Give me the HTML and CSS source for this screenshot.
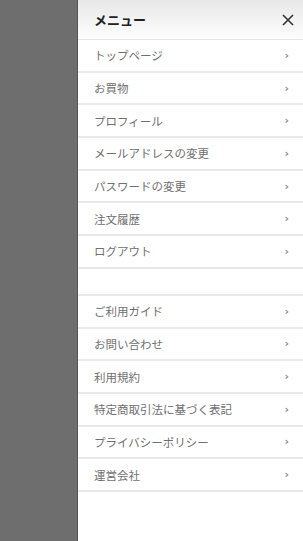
FILE: index.html
```html
<!DOCTYPE html>
<html lang="ja">
<head>
    <meta charset="UTF-8">
    <meta name="viewport" content="width=device-width, initial-scale=1.0">
    <title>メニュー</title>
    <link rel="stylesheet" href="styles.css">
</head>
<body>

    <div class="overlay"></div>

    <nav class="drawer">
        <!-- Header -->
        <div class="drawer-header">
            <span class="drawer-title">メニュー</span>
            <span class="drawer-close">
                <svg width="12" height="12" viewBox="0 0 12 12">
                    <path d="M1 1 L11 11 M11 1 L1 11" stroke="#333" stroke-width="1.6" fill="none"/>
                </svg>
            </span>
        </div>

        <!-- Member Menu -->
        <ul class="menu-list">
            <li><a href="#">トップページ</a></li>
            <li><a href="#">お買物</a></li>
            <li><a href="#">プロフィール</a></li>
            <li><a href="#">メールアドレスの変更</a></li>
            <li><a href="#">パスワードの変更</a></li>
            <li><a href="#">注文履歴</a></li>
            <li><a href="#">ログアウト</a></li>
        </ul>

        <div class="menu-spacer"></div>

        <!-- Info Menu -->
        <ul class="menu-list">
            <li><a href="#">ご利用ガイド</a></li>
            <li><a href="#">お問い合わせ</a></li>
            <li><a href="#">利用規約</a></li>
            <li><a href="#">特定商取引法に基づく表記</a></li>
            <li><a href="#">プライバシーポリシー</a></li>
            <li><a href="#">運営会社</a></li>
        </ul>
    </nav>

</body>
</html>
```

FILE: styles.css
```css
/* General Styles */
* {
    margin: 0;
    padding: 0;
    box-sizing: border-box;
}

body {
    font-family: "Noto Sans CJK JP", "Liberation Sans", sans-serif;
    display: flex;
    min-height: 100vh;
    background: #fff;
}

/* Dimmed page behind the drawer */
.overlay {
    width: 78px;
    flex-shrink: 0;
    background: #6e6e6e;
    border-right: 1px solid #555;
}

.drawer {
    flex: 1;
    background: #fff;
}

/* Header */
.drawer-header {
    height: 40px;
    display: flex;
    align-items: center;
    justify-content: space-between;
    padding: 0 9px 0 16px;
    background: linear-gradient(to bottom, #e8e8e8 0%, #fdfdfd 100%);
    border-bottom: 1px solid #e6e6e6;
}

.drawer-title {
    font-size: 13px;
    font-weight: bold;
    color: #222;
}

.drawer-close {
    display: flex;
    width: 12px;
    height: 12px;
}

/* Menu rows */
.menu-list {
    list-style: none;
}

.menu-list li {
    border-bottom: 2px solid #e9e9e9;
}

.menu-list a {
    display: flex;
    align-items: center;
    justify-content: space-between;
    height: 30.7px;
    padding: 0 14px 0 16px;
    font-size: 11.5px;
    color: #707070;
    text-decoration: none;
}

.menu-list a::after {
    content: "›";
    font-family: "DejaVu Sans", sans-serif;
    font-size: 11px;
    font-weight: bold;
    color: #888;
}

.menu-spacer {
    height: 27px;
    border-bottom: 2px solid #e9e9e9;
}
```
